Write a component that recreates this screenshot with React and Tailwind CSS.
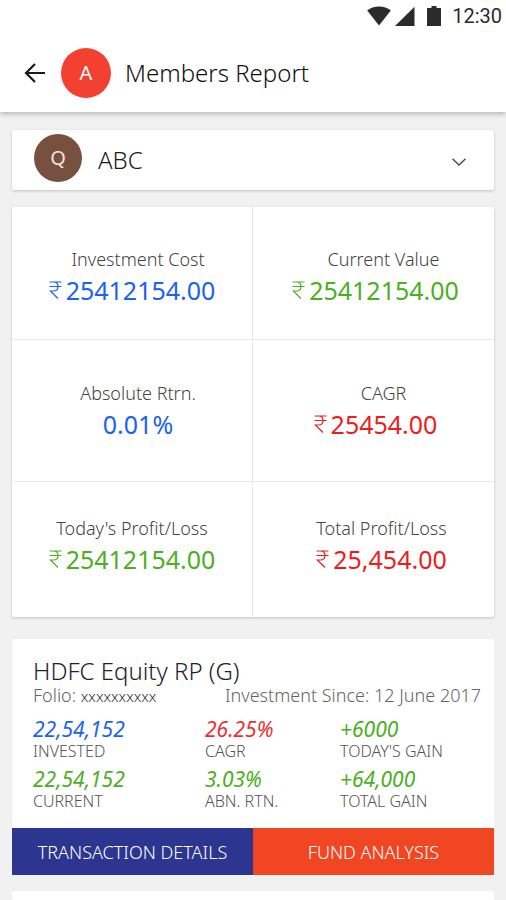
import React from 'react';

const stats = [
  { label: 'Investment Cost', value: '25412154.00', rupee: true, color: 'text-[#1a63f0]', cell: 'pt-[38px] pb-8 border-r border-b', labelPad: 'pl-3' },
  { label: 'Current Value', value: '25412154.00', rupee: true, color: 'text-[#4caf1f]', cell: 'pt-[38px] pb-8 pl-1 border-b', labelPad: 'pl-4' },
  { label: 'Absolute Rtrn.', value: '0.01%', color: 'text-[#1a63f0]', cell: 'pt-[39px] pb-10 pl-3 border-r border-b', labelPad: '' },
  { label: 'CAGR', value: '25454.00', rupee: true, color: 'text-[#ee1c1c]', cell: 'pt-[39px] pb-10 pl-1 border-b', labelPad: 'pl-4' },
  { label: 'Today\'s Profit/Loss', value: '25412154.00', rupee: true, color: 'text-[#4caf1f]', cell: 'pt-8 pb-[41px] border-r', labelPad: '' },
  { label: 'Total Profit/Loss', value: '25,454.00', rupee: true, color: 'text-[#ee1c1c]', cell: 'pt-8 pb-[41px] pl-4', labelPad: '' },
];

const fund = [
  { label: 'INVESTED', value: '22,54,152', color: 'text-[#1a63f0]' },
  { label: 'CAGR', value: '26.25%', color: 'text-[#f03030]' },
  { label: 'TODAY\'S GAIN', value: '+6000', color: 'text-[#4caf1f]' },
  { label: 'CURRENT', value: '22,54,152', color: 'text-[#4caf1f]' },
  { label: 'ABN. RTN.', value: '3.03%', color: 'text-[#4caf1f]' },
  { label: 'TOTAL GAIN', value: '+64,000', color: 'text-[#4caf1f]' },
];

function StatusBar() {
  return (
    <div className="flex items-center justify-end h-8 pr-1 text-[#2b2b2b]">
      <svg className="w-6 h-5" viewBox="0 0 24 20" fill="currentColor">
        <path d="M12 19.5 0.2 4.6C3.4 2 7.5 0.6 12 0.6s8.600 1.400 11.800 4z" />
      </svg>
      <svg className="w-5 h-5 ml-1" viewBox="0 0 20 20" fill="currentColor">
        <path d="M0 20 19.500 0.800V20z" />
      </svg>
      <svg className="w-[14px] h-5 ml-3" viewBox="0 0 14 20" fill="currentColor">
        <path d="M4.500 0h5v2H14v18H0V2h4.500z" />
      </svg>
      <span className="ml-[11px] text-xl leading-8 font-[Roboto,sans-serif]">12:30</span>
    </div>
  );
}

function Header() {
  return (
    <header className="relative bg-white shadow-[0_2px_5px_rgba(0,0,0,0.25)]">
      <StatusBar />
      <div className="flex items-center h-20 pl-6 pt-0.5">
        <button aria-label="Back" className="cursor-pointer">
          <svg className="w-[22px] h-5" viewBox="0 0 22 20" fill="none" stroke="#1a1a1a" strokeWidth="2.2">
            <path d="M21 10H2.500M11 1 2 10l9 9" />
          </svg>
        </button>
        <div className="flex items-center justify-center w-[50px] h-[50px] ml-[15px] rounded-full bg-[#f44030] text-white text-xl">A</div>
        <h1 className="ml-[14px] text-2xl font-light text-[#111111]">Members Report</h1>
      </div>
    </header>
  );
}

function MemberSelect() {
  return (
    <div className="relative flex items-center bg-white rounded-xs shadow-[0_1px_3px_rgba(0,0,0,0.2)] h-[60px]">
      <div className="flex items-center justify-center w-12 h-12 ml-[22px] mb-1 rounded-full bg-[#78503f] text-[#f5e3d5] text-xl">Q</div>
      <select aria-label="Member" className="flex-1 h-full pl-4 appearance-none bg-transparent text-2xl font-light text-[#1c1c1c] outline-none">
        <option>ABC</option>
      </select>
      <svg className="absolute right-7 top-7 w-[14px] h-2 pointer-events-none" viewBox="0 0 14 8" fill="none" stroke="#4a4a4a" strokeWidth="1.4">
        <path d="M0.500 0.700 7 7l6.500-6.300" />
      </svg>
    </div>
  );
}

function Rupee() {
  return (
    <svg role="img" aria-label="Rupees" className="w-[13px] h-[18px] mr-1 shrink-0" viewBox="0 0 13 18" fill="none" stroke="currentColor" strokeWidth="1.2">
      <path d="M0.500 1h12M0.500 5.500h12M1 1H4.500c6 0 6 9 0 9H1.300L9 17.500" />
    </svg>
  );
}

function Stats() {
  return (
    <section className="grid grid-cols-2 bg-white rounded-xs shadow-[0_1px_3px_rgba(0,0,0,0.2)]">
      {stats.map((s) => (
        <div key={s.label} className={`border-[#e8e8e8] text-center ${s.cell}`}>
          <div className={`text-lg leading-7 font-light text-[#444444] ${s.labelPad}`}>{s.label}</div>
          <div className={`flex items-center justify-center text-[25px] leading-[34px] ${s.color}`}>
            {s.rupee && <Rupee />}
            {s.value}
          </div>
        </div>
      ))}
    </section>
  );
}

function FundCard() {
  return (
    <section className="bg-white rounded-xs">
      <div className="px-[21px] pt-[18px]">
        <h2 className="text-2xl leading-7 font-light text-[#1c232b]">HDFC Equity RP (G)</h2>
        <div className="flex items-baseline justify-between -mr-2 text-lg leading-5 font-light text-[#666666]">
          <span>Folio: <span className="text-[15px] text-[#333333]">xxxxxxxxxx</span></span>
          <span>Investment Since: 12 June 2017</span>
        </div>
        <div className="grid grid-cols-[172fr_135fr_133fr] gap-y-1.5 pt-[11px] pb-[17px]">
          {fund.map((f) => (
            <div key={f.label}>
              <div className={`text-[21px] leading-6 italic ${f.color}`}>{f.value}</div>
              <div className="text-base leading-5 font-light text-[#555555]">{f.label}</div>
            </div>
          ))}
        </div>
      </div>
      <div className="grid grid-cols-2 h-[47px] text-lg font-light text-white">
        <button className="bg-[#2c3590] cursor-pointer">TRANSACTION DETAILS</button>
        <button className="bg-[#f04722] cursor-pointer">FUND ANALYSIS</button>
      </div>
    </section>
  );
}

function App() {
  return (
    <div className="flex flex-col min-h-screen bg-[#f1f1f1] font-['Noto_Sans',sans-serif]">
      <Header />
      <main className="flex flex-col flex-1 px-3 pt-[18px]">
        <MemberSelect />
        <div className="mt-[17px]">
          <Stats />
        </div>
        <div className="mt-[22px]">
          <FundCard />
        </div>
        {/* next fund card, cut off by the fold */}
        <div className="flex-1 mt-4 bg-white rounded-t-xs"></div>
      </main>
    </div>
  );
}

export default App;
